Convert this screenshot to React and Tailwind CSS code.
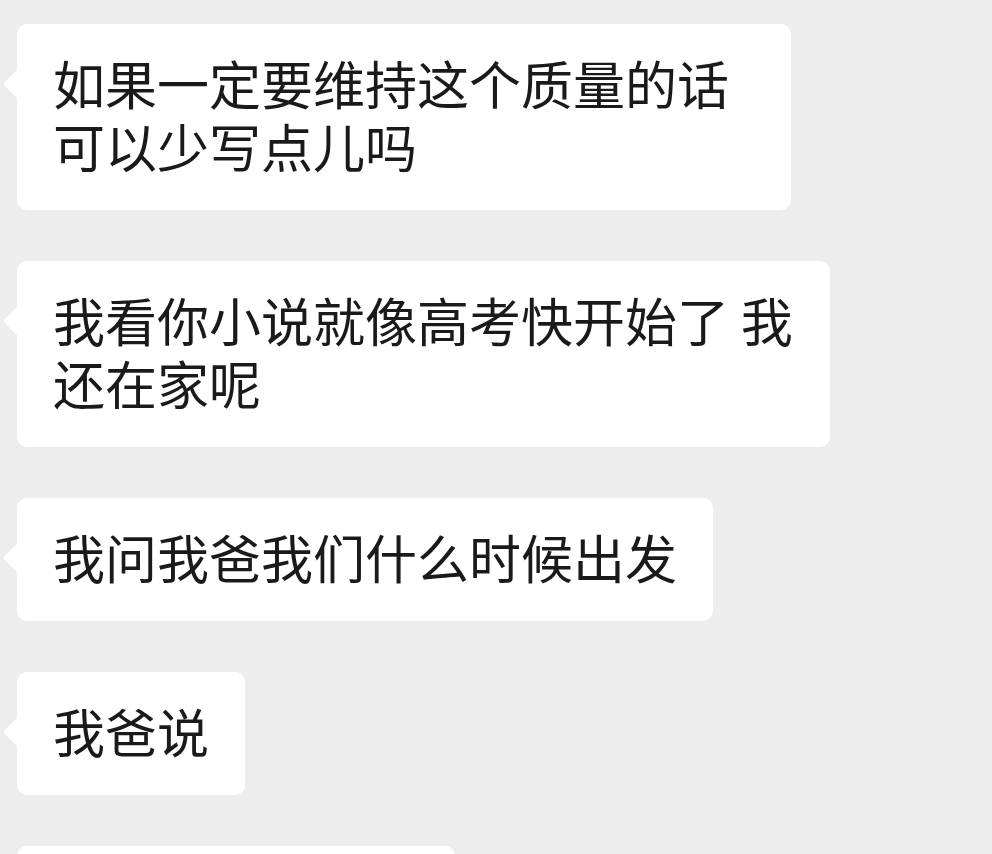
const messages = [
  { id: 1, text: '如果一定要维持这个质量的话可以少写点儿吗', width: 'w-[774px]' },
  { id: 2, text: '我看你小说就像高考快开始了 我还在家呢', width: 'w-[813px]' },
  { id: 3, text: '我问我爸我们什么时候出发', width: 'w-[696px]' },
  { id: 4, text: '我爸说', width: 'w-[228px]' },
  { id: 5, text: '等你写完再说', width: 'w-[438px]' },
];

const Bubble = ({ text, width }) => (
  <div className={`relative ${width} bg-white rounded-[10px] pl-[36px] pr-[34px] pt-[27px] pb-[33px]`}>
    <div className="absolute left-[-10px] top-[50px] w-5 h-5 bg-white rotate-45 rounded-[2px]" />
    <p className="relative text-[52px] leading-[63px] text-[#1a1a1a] break-all">{text}</p>
  </div>
);

export default function App() {
  return (
    <div
      className="min-h-screen bg-[#ededed] pl-[17px] pt-[24px] flex flex-col gap-[51px]"
      style={{ fontFamily: '"Noto Sans CJK SC", "Noto Sans", sans-serif' }}
    >
      {messages.map(m => <Bubble key={m.id} text={m.text} width={m.width} />)}
    </div>
  );
}
